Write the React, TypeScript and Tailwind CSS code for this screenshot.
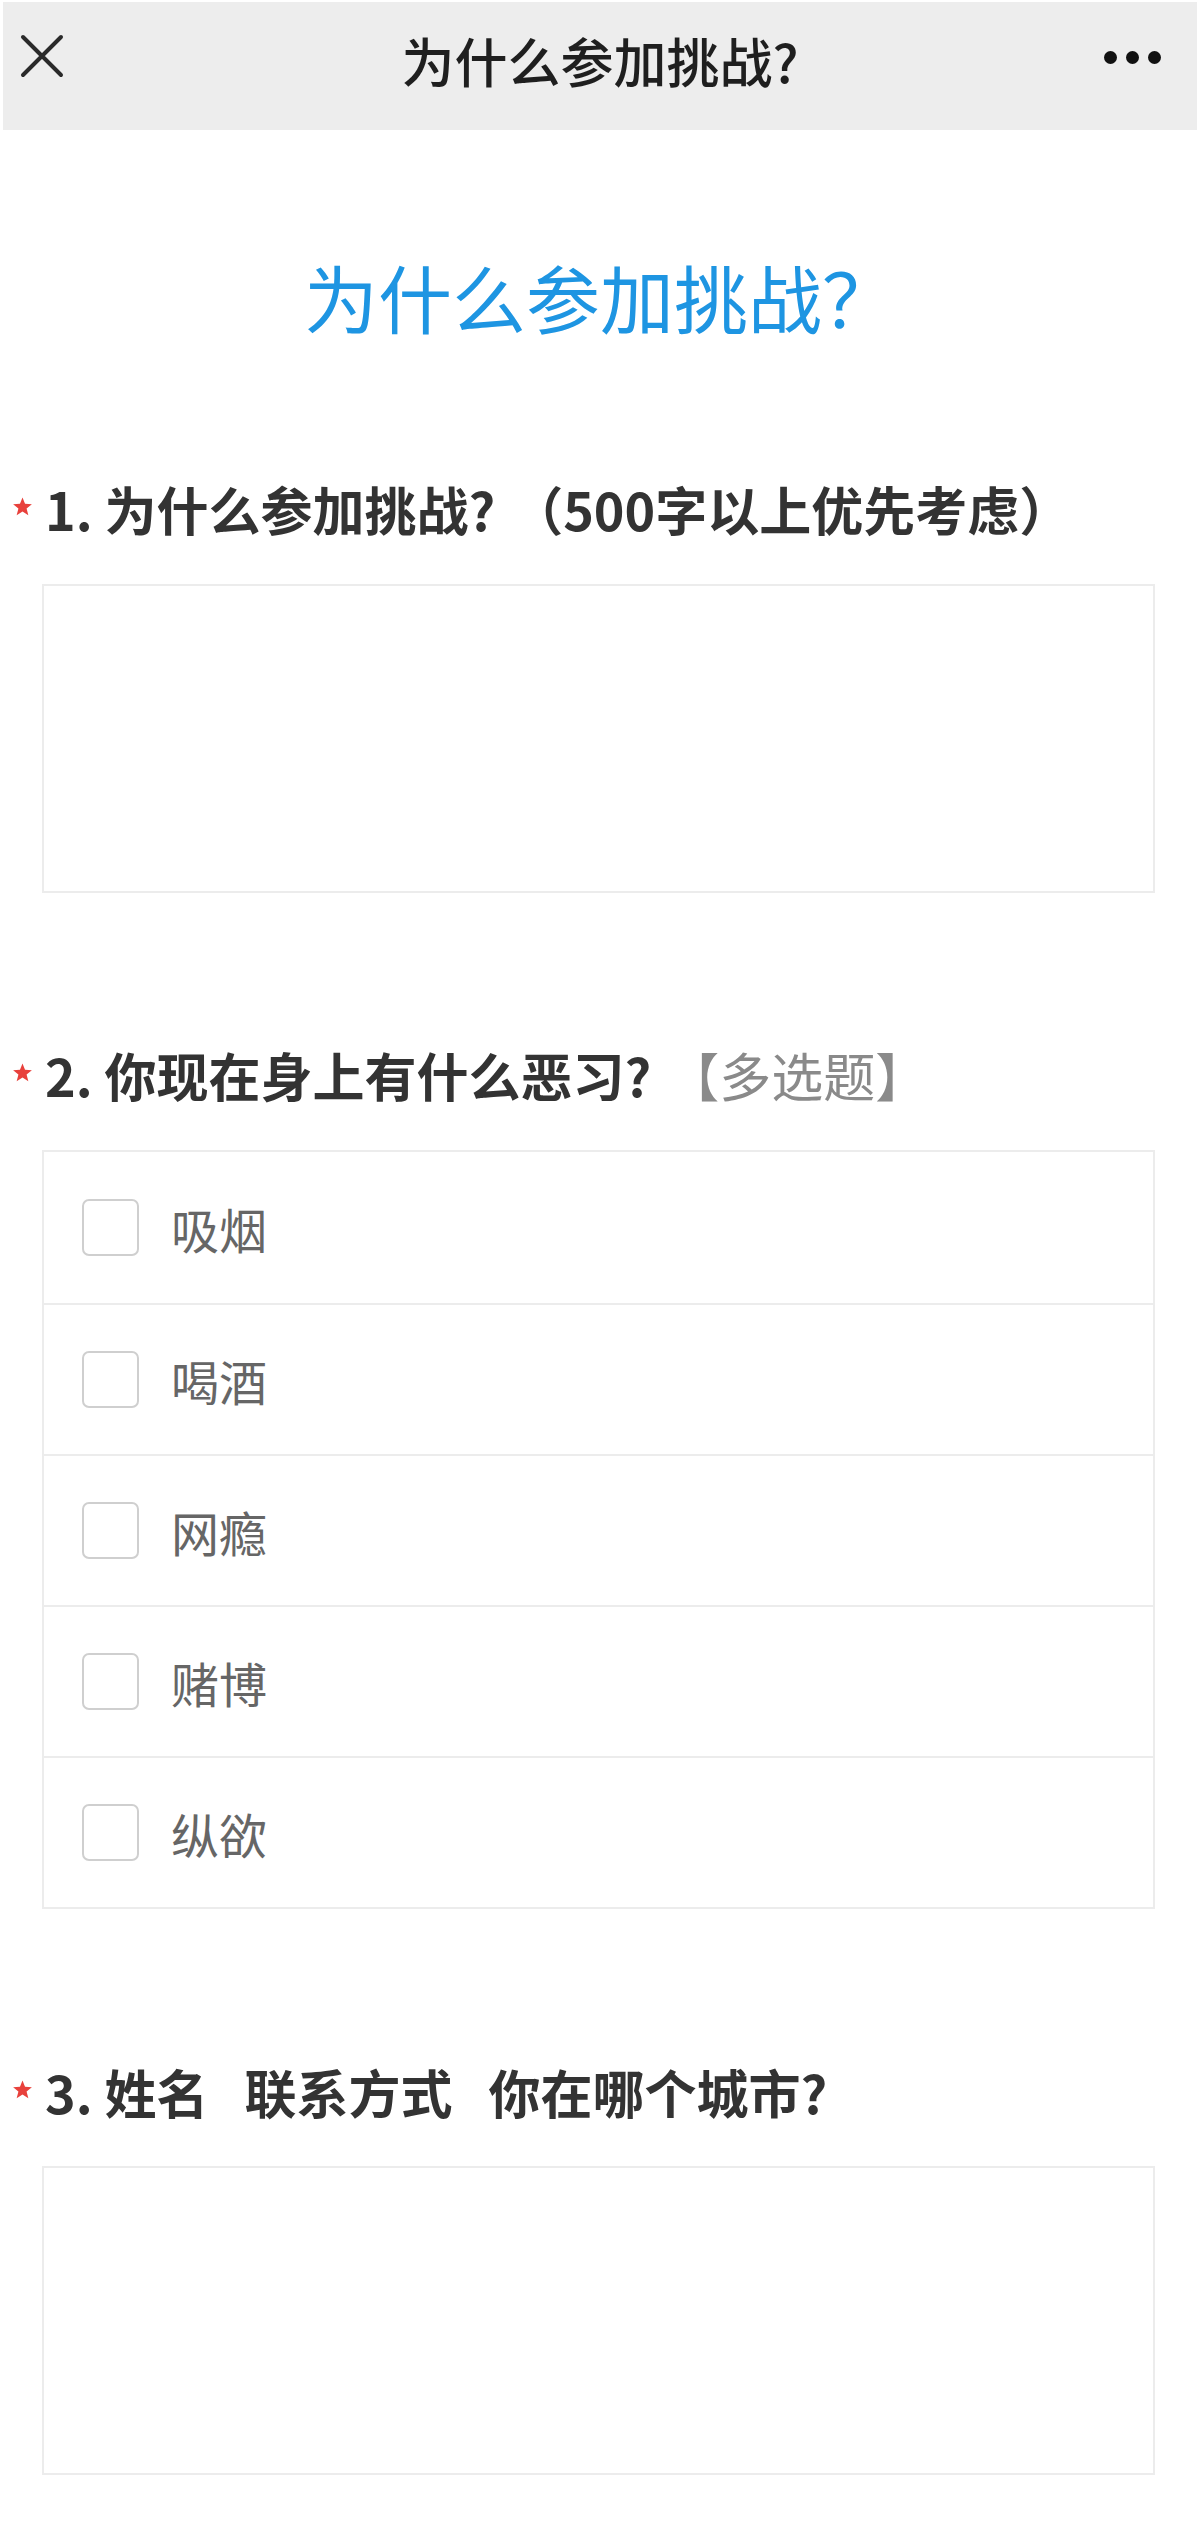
import React from 'react';

const habits = ['吸烟', '喝酒', '网瘾', '赌博', '纵欲'];

const Star = () => (
  <svg width="21" height="20" viewBox="0 0 24 23" className="text-[#e8413c]">
    <path
      d="M12 0.5l2.9 7.4 7.9 0.4-6.1 5 2 7.7L12 16.7 5.3 21l2-7.7-6.1-5 7.9-0.4z"
      fill="currentColor"
    />
  </svg>
);

const Label: React.FC<{ children: React.ReactNode }> = ({ children }) => (
  <div className="flex items-center h-[60px] pl-[12px]">
    <span className="w-[33px] flex items-center pb-[4px]">
      <Star />
    </span>
    <div className="text-[52px] leading-[60px] font-bold text-[#333333] whitespace-nowrap">{children}</div>
  </div>
);

const App: React.FC = () => {
  return (
    <div className="w-[1200px] min-h-[2521px] bg-white font-['Noto_Sans_CJK_SC','Noto_Sans',sans-serif]">
      {/* top bar */}
      <div className="pt-[2px] px-[3px]">
        <div className="h-[128px] bg-[#ededed] grid grid-cols-[1fr_auto_1fr] items-center">
          <div className="pl-[17px] pb-[20px] flex items-center">
            <svg width="44" height="44" viewBox="0 0 44 44" className="text-[#2a2a2a]">
              <path d="M3 3L41 41M41 3L3 41" stroke="currentColor" strokeWidth="4" strokeLinecap="round" />
            </svg>
          </div>
          <div className="text-[53px] leading-none font-medium text-[#1f1f1f] pb-[12px]">为什么参加挑战?</div>
          <div className="flex justify-end items-center gap-[9px] pr-[36px] pb-[18px]">
            <span className="w-[13px] h-[13px] rounded-full bg-[#111]" />
            <span className="w-[13px] h-[13px] rounded-full bg-[#111]" />
            <span className="w-[13px] h-[13px] rounded-full bg-[#111]" />
          </div>
        </div>
      </div>

      {/* title */}
      <h1 className="pt-[129px] pb-[7px] text-center text-[74px] leading-none text-[#1e95e2]">为什么参加挑战？</h1>

      {/* Q1 */}
      <div className="mt-[139px]">
        <Label>
          1. 为什么参加挑战?<span className="inline-block w-[16px]" />（500字以上优先考虑）
        </Label>
        <div className="mt-[45px] ml-[42px] mr-[45px] h-[309px] border-2 border-[#ececec]" />
      </div>

      {/* Q2 */}
      <div className="mt-[152px]">
        <Label>
          2. 你现在身上有什么恶习?<span className="inline-block w-[16px]" />
          <span className="font-normal text-[#8a8a8a]">【多选题】</span>
        </Label>
        <div className="mt-[45px] ml-[42px] mr-[45px] border-2 border-[#ececec]">
          {habits.map((h, i) => (
            <div
              key={h}
              className={`h-[151px] flex items-center pl-[38px] gap-[32px] ${i > 0 ? 'border-t-2 border-[#ececec]' : ''}`}
            >
              <span className="w-[57px] h-[57px] rounded-[7px] border-2 border-[#cfcfcf] bg-white" />
              <span className="text-[48px] leading-none text-[#666666]">{h}</span>
            </div>
          ))}
        </div>
      </div>

      {/* Q3 */}
      <div className="mt-[153px]">
        <Label>
          3. 姓名<span className="inline-block w-[36px]" />联系方式<span className="inline-block w-[36px]" />你在哪个城市?
        </Label>
        <div className="mt-[44px] ml-[42px] mr-[45px] h-[309px] border-2 border-[#ececec]" />
      </div>
    </div>
  );
};

export default App;
